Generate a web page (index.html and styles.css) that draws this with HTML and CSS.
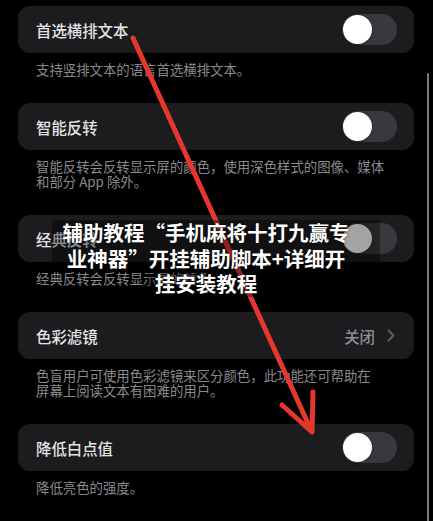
FILE: index.html
```html
<!DOCTYPE html>
<html lang="zh-CN">
<head>
<meta charset="utf-8">
<link rel="stylesheet" href="styles.css">
</head>
<body>
<div class="screen">
  <section class="group">
    <div class="card"><span class="title">首选横排文本</span><span class="switch"><span class="knob"></span></span></div>
    <p class="note">支持竖排文本的语言首选横排文本。</p>
  </section>
  <section class="group">
    <div class="card"><span class="title">智能反转</span><span class="switch"><span class="knob"></span></span></div>
    <p class="note">智能反转会反转显示屏的颜色，使用深色样式的图像、媒体<br>和部分 App 除外。</p>
  </section>
  <section class="group">
    <div class="card"><span class="title">经典反转</span><span class="switch"><span class="knob"></span></span></div>
    <p class="note">经典反转会反转显示屏的颜色。</p>
  </section>
  <section class="group">
    <div class="card"><span class="title">色彩滤镜</span><span class="detail"><span class="value">关闭</span><svg class="chev" width="8" height="13" viewBox="0 0 8 13"><polyline points="1.5,1.5 6.5,6.5 1.5,11.5" fill="none" stroke="#5e5e63" stroke-width="2" stroke-linecap="round" stroke-linejoin="round"/></svg></span></div>
    <p class="note">色盲用户可使用色彩滤镜来区分颜色，此功能还可帮助在<br>屏幕上阅读文本有困难的用户。</p>
  </section>
  <section class="group">
    <div class="card"><span class="title">降低白点值</span><span class="switch"><span class="knob"></span></span></div>
    <p class="note">降低亮色的强度。</p>
  </section>

  <div class="scrollbar"></div>

  <svg class="arrow" width="433" height="521" viewBox="0 0 433 521">
    <g fill="none" stroke="#e6372e" stroke-width="5" stroke-linecap="round" stroke-linejoin="round">
      <line x1="133" y1="38" x2="311" y2="430"/>
      <polyline points="282,405 312,432 313,392"/>
    </g>
  </svg>

  <div class="caption">
    <div class="line wide">辅助教程“手机麻将十打九赢专</div>
    <div class="line wide">业神器”开挂辅助脚本+详细开</div>
    <div class="line short">挂安装教程</div>
  </div>
</div>
</body>
</html>
```

FILE: styles.css
```css
html, body {
  margin: 0;
  padding: 0;
  background: #000;
}
body {
  width: 433px;
  height: 521px;
  overflow: hidden;
  font-family: "Noto Sans CJK SC", "Noto Sans", sans-serif;
}
.screen {
  position: relative;
  width: 433px;
  height: 521px;
  padding: 6px 19px 0 18px;
  box-sizing: border-box;
}
.group {
  margin: 0;
}
.card {
  height: 47px;
  background: #1c1c1e;
  border-radius: 12px;
  display: flex;
  align-items: center;
  justify-content: space-between;
  padding: 0 17px 0 18px;
  box-sizing: border-box;
}
.title {
  color: #e4e4e6;
  font-size: 15.4px;
  font-weight: 500;
  line-height: 20px;
}
.switch {
  width: 55px;
  height: 31px;
  border-radius: 16px;
  background: #39393d;
  display: flex;
  align-items: center;
  padding: 1px;
  box-sizing: border-box;
}
.knob {
  width: 29px;
  height: 29px;
  border-radius: 50%;
  background: #fff;
  box-shadow: 0 1px 3px rgba(0,0,0,0.35);
}
.detail {
  display: flex;
  align-items: center;
  gap: 12px;
  margin-right: 2px;
}
.value {
  color: #8d8d93;
  font-size: 15.4px;
  font-weight: 500;
  line-height: 20px;
}
.chev {
  display: block;
}
.note {
  margin: 0;
  padding: 9px 0 26px 18px;
  color: #8a8a8e;
  font-size: 13.4px;
  line-height: 15px;
}
.scrollbar {
  position: absolute;
  left: 426.5px;
  top: 73px;
  width: 2.5px;
  height: 460px;
  border-radius: 1px;
  background: #7a7a7c;
}
.arrow {
  position: absolute;
  left: 0;
  top: 0;
}
.caption {
  position: absolute;
  left: 52px;
  top: 220px;
  display: flex;
  flex-direction: column;
  color: #fff;
  font-size: 20.5px;
  font-weight: 700;
  line-height: 25.5px;
  text-shadow: 0 0 2px rgba(0,0,0,0.9);
  white-space: nowrap;
}
.line {
  background: rgba(0,0,0,0.36);
  text-align: center;
  box-sizing: border-box;
}
.wide {
  width: 328px;
  padding-right: 20px;
}
.short {
  width: 118px;
  margin-left: 95px;
}
```
